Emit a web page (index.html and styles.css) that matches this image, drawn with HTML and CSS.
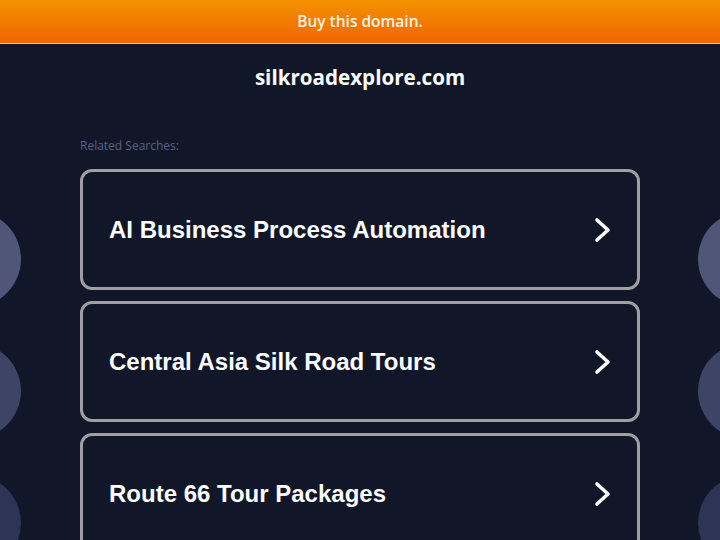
FILE: index.html
```html
<!DOCTYPE html>
<html lang="en">
<head>
  <meta charset="UTF-8" />
  <meta name="viewport" content="width=device-width, initial-scale=1" />
  <title>silkroadexplore.com</title>
  <link rel="stylesheet" href="styles.css">
</head>
<body>
  <div class="buy-bar">Buy this domain.</div>

  <div class="decor">
    <span class="dot left d1"></span>
    <span class="dot left d2"></span>
    <span class="dot left d3"></span>
    <span class="dot right d1"></span>
    <span class="dot right d2"></span>
    <span class="dot right d3"></span>
  </div>

  <h1 class="domain">silkroadexplore.com</h1>

  <div class="content">
    <p class="related">Related Searches:</p>

    <a class="search-card" href="#">
      <span>AI Business Process Automation</span>
      <svg class="chevron" viewBox="0 0 20 28" width="20" height="28"><path d="M4 4 L15 14 L4 24" /></svg>
    </a>
    <a class="search-card" href="#">
      <span>Central Asia Silk Road Tours</span>
      <svg class="chevron" viewBox="0 0 20 28" width="20" height="28"><path d="M4 4 L15 14 L4 24" /></svg>
    </a>
    <a class="search-card" href="#">
      <span>Route 66 Tour Packages</span>
      <svg class="chevron" viewBox="0 0 20 28" width="20" height="28"><path d="M4 4 L15 14 L4 24" /></svg>
    </a>
  </div>
</body>
</html>
```

FILE: styles.css
```css
body {
  margin: 0;
  background: #111629;
  color: #fff;
  font-family: "Liberation Sans", Arial, sans-serif;
  overflow: hidden;
  position: relative;
  height: 540px;
}
.buy-bar {
  height: 43px;
  line-height: 43px;
  text-align: center;
  background: linear-gradient(to bottom, #f59300, #f06400);
  border-bottom: 1px solid #f3d9a6;
  font-family: "Open Sans", sans-serif;
  font-weight: 600;
  font-size: 15.5px;
  color: #fff6ea;
}
.decor {
  position: absolute;
  inset: 0;
  overflow: hidden;
  pointer-events: none;
}
.dot {
  position: absolute;
  width: 96px;
  height: 96px;
  border-radius: 50%;
}
.dot.left { left: -75px; }
.dot.right { right: -74px; }
.d1 { top: 211px; background: #4f5678; }
.d2 { top: 343px; background: #3d4465; }
.d3 { top: 475px; background: #2d3455; }
.domain {
  margin: 0;
  padding-top: 20px;
  height: 30px;
  line-height: 26px;
  text-align: center;
  font-family: "Open Sans", sans-serif;
  font-weight: 700;
  font-size: 20.6px;
}
.content {
  position: relative;
  width: 560px;
  margin: 0 auto;
  padding-top: 45px;
}
.related {
  margin: 0 0 16px;
  font-size: 12px;
  font-family: "Open Sans", sans-serif;
  color: #5d6382;
  line-height: 14px;
}
.search-card {
  display: flex;
  align-items: center;
  justify-content: space-between;
  box-sizing: border-box;
  height: 121px;
  margin-bottom: 11px;
  padding: 0 24px 0 26px;
  border: 3px solid #9e9fa3;
  border-radius: 12px;
  background: #111629;
  color: #fff;
  text-decoration: none;
  font-weight: 700;
  font-size: 24px;
}
.chevron {
  fill: none;
  stroke: #fff;
  stroke-width: 3.6;
  stroke-linecap: round;
  stroke-linejoin: round;
}
```
